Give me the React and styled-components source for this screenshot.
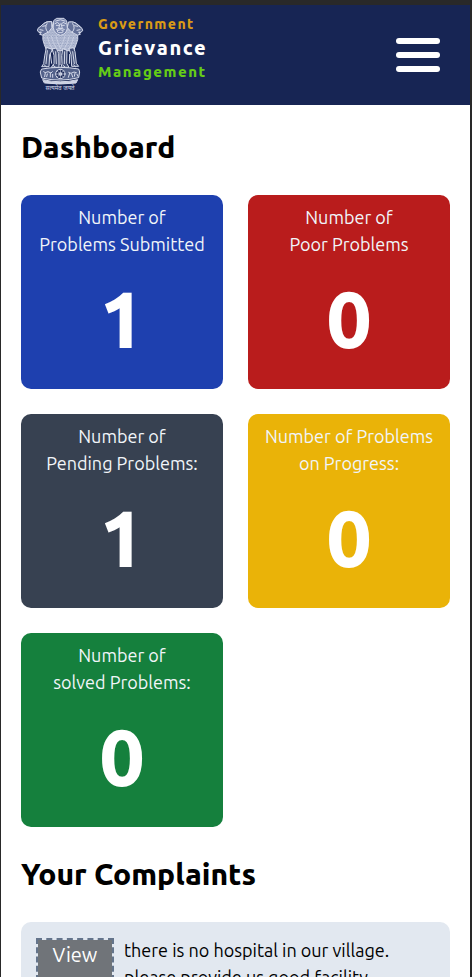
import React from 'react';
import styled, { createGlobalStyle } from 'styled-components';

const GlobalStyle = createGlobalStyle`
  *, *::before, *::after { box-sizing: border-box; }
  html { scrollbar-width: none; }
  body {
    margin: 0;
    background: #fff;
    color: #000;
    font-family: Ubuntu, "Noto Sans", "Open Sans", sans-serif;
    font-weight: 400;
  }
  h1, h2, p, dl, dt, dd { margin: 0; }
`;

const Page = styled.div`
  min-height: 100vh;
  border: solid #292929;
  border-width: 5px 2px 0 1px;
`;

const Header = styled.header`
  display: flex;
  align-items: center;
  justify-content: space-between;
  height: 100px;
  padding: 0 30px 0 34px;
  background: #172554;
`;

const Brand = styled.a`
  display: flex;
  align-items: center;
  gap: 13px;
  color: #fff;
  text-decoration: none;
`;

const BrandText = styled.span`
  display: flex;
  flex-direction: column;
  padding-bottom: 14px;
  font-weight: 800;
  line-height: 24px;
`;

const BrandLine = styled.span`
  color: ${({ $color }) => $color};
  font-size: ${({ $size }) => $size};
  letter-spacing: ${({ $tracking }) => $tracking || '0.1em'};
`;

const MenuButton = styled.button`
  display: flex;
  flex-direction: column;
  gap: 8px;
  padding: 0;
  border: 0;
  background: none;
  cursor: pointer;
`;

const MenuBar = styled.span`
  width: 44px;
  height: 6px;
  border-radius: 3px;
  background: #fff;
`;

const Main = styled.main`
  padding: 20px;
`;

const Heading = styled.h1`
  margin-bottom: 25px;
  font-size: 30px;
  font-weight: 800;
  line-height: 45px;
`;

const Stats = styled.dl`
  display: grid;
  grid-template-columns: repeat(2, minmax(0, 1fr));
  gap: 25px;
  margin-bottom: 25px;
`;

const StatCard = styled.div`
  padding: 9px 8px 31px;
  border-radius: 10px;
  background: ${({ $color }) => $color};
  color: #fff;
  text-align: center;
`;

const StatLabel = styled.dt`
  margin-bottom: 20px;
  color: #f1f5f9;
  font-size: 18px;
  line-height: 27px;
  white-space: pre-line;
`;

const StatValue = styled.dd`
  font-size: 80px;
  font-weight: 800;
  line-height: 80px;
`;

const Complaint = styled.article`
  display: flex;
  align-items: flex-start;
  gap: 10px;
  padding: 15px;
  border-radius: 10px;
  background: #e2e8f0;
`;

const ViewButton = styled.button`
  flex: none;
  width: 78px;
  margin-top: 1px;
  padding: 0 0 9px;
  border: 2px dashed #64748b;
  background: #707479;
  background-clip: padding-box;
  color: #fff;
  font-family: inherit;
  font-size: 20px;
  line-height: 30px;
  cursor: pointer;
`;

const ComplaintText = styled.p`
  font-size: 18px;
  line-height: 27px;
`;

const stats = [
  { label: 'Number of\nProblems Submitted', value: 1, color: '#1e40af' },
  { label: 'Number of\nPoor Problems', value: 0, color: '#b91c1c' },
  { label: 'Number of\nPending Problems:', value: 1, color: '#374151' },
  { label: 'Number of Problems\non Progress:', value: 0, color: '#eab308' },
  { label: 'Number of\nsolved Problems:', value: 0, color: '#15803d' },
];

function Emblem() {
  return (
    <svg width="50" height="76" viewBox="16 15 150 228" fill="none" stroke="#d5daea" strokeWidth="3" strokeLinecap="round" strokeLinejoin="round" role="img" aria-label="State emblem">
      <defs>
        <pattern id="curls" width="8" height="8" patternUnits="userSpaceOnUse">
          <rect width="8" height="8" fill="#8e9abb" stroke="none" />
          <path d="M0 2Q4 8 8 2M-4 6Q0 12 4 6M4 6Q8 12 12 6" stroke="#d5daea" strokeWidth="2" />
        </pattern>
      </defs>
      <path fill="url(#curls)" d="M65 29Q48 27 41 36Q28 44 25 57Q32 67 40 66Q37 83 44 98L51 116H132L139 98Q147 82 144 66Q153 65 158 55Q153 42 141 35Q130 27 117 31L112 51H72Z" />
      <path fill="#647199" d="M65 29Q46 28 38 39L25 49Q20 58 28 61L35 60L30 67Q39 73 46 65L57 60L66 48Z" />
      <path fill="#647199" d="M117 30Q136 27 144 39L157 49Q162 57 154 61L147 60L152 67Q142 73 135 65L124 59L114 48Z" />
      <path d="M39 43L48 41M31 53L40 55M144 43L135 41M151 53L142 55M52 35Q43 48 54 60M129 35Q139 48 128 60" />
      <path fill="#7582a9" d="M73 25L81 19H103L111 27L113 49Q110 67 92 70Q74 65 71 49Z" />
      <path d="M78 27Q92 19 106 27M76 35L84 31L89 37M108 35L100 31L95 37M80 40H87M97 40H104M91 36L87 49H98L94 36M80 52Q92 45 104 52M83 56L92 53L101 56L98 62H87Z" />
      <path d="M53 74Q58 98 68 110M65 73Q70 93 80 109M79 72Q84 91 92 110Q100 92 106 72M119 72Q114 95 104 111M132 75Q127 98 117 112" strokeWidth="2" />
      <path fill="#435078" d="M50 107Q44 133 42 155L36 164H58L60 129L68 113ZM68 112Q76 127 73 155L65 166H88L87 124L80 109ZM99 111Q94 129 97 155L94 166H118L111 154L112 116ZM118 110L124 128L126 163H147L140 154L136 119L132 108Z" />
      <path d="M53 116L49 155M78 119L80 155M105 119L104 155M129 119L134 155M44 159L50 164M70 160L77 165M100 160L106 165M132 159L137 164M91 118V158M62 126L66 154M120 127L119 154" />
      <path fill="#53618a" d="M37 171Q91 161 147 171L150 180L147 197Q92 211 36 198L32 181Z" />
      <circle cx="92" cy="186" r="14" fill="#172554" />
      <circle cx="92" cy="186" r="4" />
      <path d="M92 172V200M78 186H106M82 176L102 196M102 176L82 196" strokeWidth="2" />
      <path d="M42 179L47 182L55 179L64 183L68 179M47 182L45 194M53 186L51 194M62 184V195M69 187V196M117 181L124 184L133 180L140 182M120 184L116 196M126 186L129 195M136 184L134 193M142 187L145 193" />
      <path fill="#cbd1e4" d="M40 203Q92 216 144 203L139 213Q92 219 45 213Z" />
      <text x="91" y="235" textAnchor="middle" fill="#d5daea" stroke="none" fontSize="18" fontFamily="Noto Sans Devanagari, Noto Sans, sans-serif">सत्यमेव जयते</text>
    </svg>
  );
}

export default function App() {
  return (
    <>
      <GlobalStyle />
      <Page>
        <Header>
          <Brand href="#home">
            <Emblem />
            <BrandText>
              <BrandLine $color="#d99b16" $size="14px">Government</BrandLine>
              <BrandLine $color="#fff" $size="20px" $tracking="0.08em">Grievance</BrandLine>
              <BrandLine $color="#65cc16" $size="15px">Management</BrandLine>
            </BrandText>
          </Brand>
          <MenuButton type="button" aria-label="Open menu">
            <MenuBar />
            <MenuBar />
            <MenuBar />
          </MenuButton>
        </Header>
        <Main>
          <Heading>Dashboard</Heading>
          <Stats>
            {stats.map(({ label, value, color }) => (
              <StatCard key={label} $color={color}>
                <StatLabel>{label}</StatLabel>
                <StatValue>{value}</StatValue>
              </StatCard>
            ))}
          </Stats>
          <Heading as="h2">Your Complaints</Heading>
          <Complaint>
            <ViewButton type="button">View</ViewButton>
            <ComplaintText>there is no hospital in our village. please provide us good facility.</ComplaintText>
          </Complaint>
        </Main>
      </Page>
    </>
  );
}
